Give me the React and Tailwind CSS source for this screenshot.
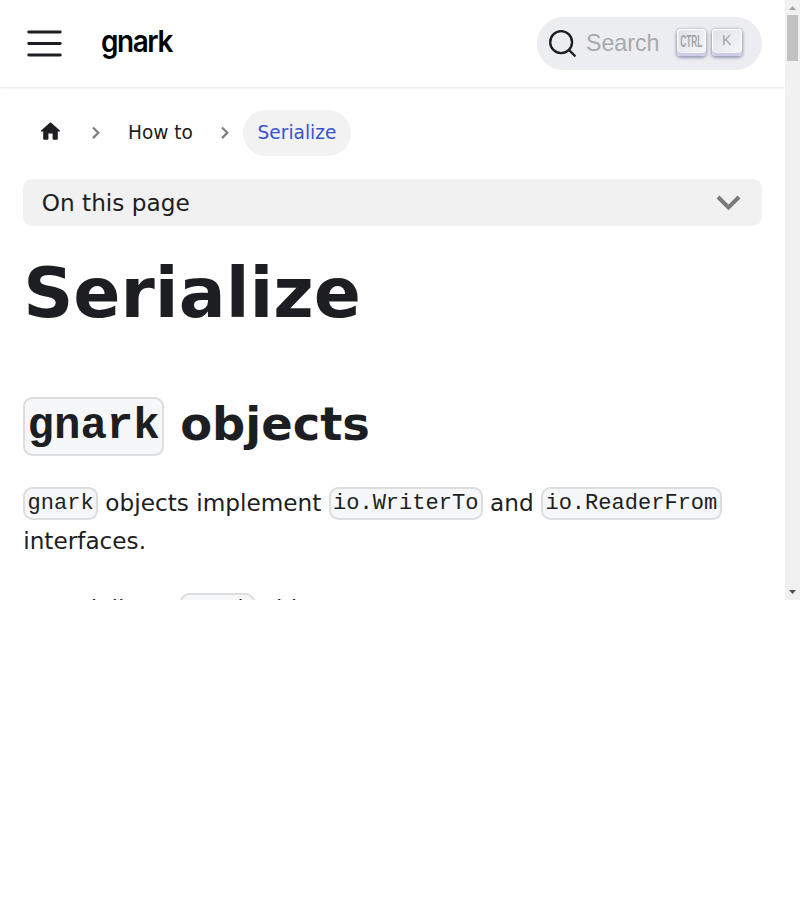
function Chevron() {
  return (
    <svg width="22" height="22" viewBox="0 0 22 22" fill="none" stroke="#7f7f7f" strokeWidth="2.2">
      <path d="M8 5.500 13.300 10.800 8 16.100" />
    </svg>
  );
}

function Code({ children }) {
  return (
    <code className="rounded-[9.28px] border-2 border-black/10 bg-[#f6f7f8] p-[2.32px] align-middle font-['Liberation_Mono',monospace] text-[95%]">
      {children}
    </code>
  );
}

function Key({ children }) {
  return (
    <kbd className="flex h-[27px] w-[29.500px] items-center justify-center rounded-[4px] bg-linear-to-br from-[#dde1e8] to-[#f8f8f8] pb-[5px] font-['Liberation_Sans',sans-serif] text-[14px] text-[#a3a4a7] shadow-[inset_0_-3px_0_0_#cdcde6,inset_0_0_1px_1px_#fff,0_1px_3px_1px_rgba(30,35,90,0.4)]">
      {children}
    </kbd>
  );
}

export default function App() {
  return (
    <div className="h-[900px] w-[800px] bg-white">
      <div className="flex h-[600px] overflow-hidden font-['DejaVu_Sans',sans-serif] text-[23.2px] leading-[38px] text-[#1c1e21]">
        <div className="h-full w-[785px] overflow-hidden">
          <nav className="flex h-[87px] items-center px-[23px] shadow-[0_1px_2px_0_rgba(0,0,0,0.1)]">
            <svg width="43" height="43" viewBox="0 0 30 30" stroke="#1c1e21" strokeLinecap="round" strokeWidth="2">
              <path d="M4 7h22M4 15h22M4 23h22" />
            </svg>
            <span className="ml-[35px] w-[90px] origin-left scale-x-[0.93] pb-[5px] font-['Inter',sans-serif] text-[30px] font-semibold tracking-[-1.5px] text-black">gnark</span>
            <button className="ml-auto flex h-[53px] w-[225px] items-center rounded-full bg-[#ebedf0] pl-[11px]">
              <svg width="29" height="29" viewBox="0 0 20 20" fill="none" stroke="#1c1e21" strokeWidth="1.6" strokeLinecap="round" strokeLinejoin="round">
                <path d="M14.386 14.386l4.0877 4.0877-4.0877-4.0877c-2.9418 2.9419-7.7115 2.9419-10.6533 0-2.9419-2.9418-2.9419-7.7115 0-10.6533 2.9418-2.9419 7.7115-2.9419 10.6533 0 2.9419 2.9418 2.9419 7.7115 0 10.6533z" />
              </svg>
              <span className="ml-[9px] w-[90.500px] pb-[2px] text-left font-['Liberation_Sans',sans-serif] text-[23.2px] text-[#a8a9ab]">Search</span>
              <span className="flex gap-[6px] pb-[2px]">
                <Key>
                  <span className="-mx-4 inline-block scale-x-[0.52] pt-[3px] text-[16px] font-bold">CTRL</span>
                </Key>
                <Key>K</Key>
              </span>
            </button>
          </nav>

          <main className="px-[23.2px] pt-[23px]">
            <div className="flex h-[46px] items-center text-[18.56px]">
              <svg className="mb-[3px] ml-[15px]" width="25" height="25" viewBox="0 0 24 24" fill="#1c1e21">
                <path d="M10 19v-5h4v5c0 .55.45 1 1 1h3c.55 0 1-.45 1-1v-7h1.700c.46 0 .68-.57.33-.87L12.670 3.600c-.38-.34-.96-.34-1.340 0l-8.360 7.530c-.34.3-.13.87.33.87H5v7c0 .55.45 1 1 1h3c.55 0 1-.45 1-1z" />
              </svg>
              <span className="ml-[22px] flex"><Chevron /></span>
              <span className="ml-[20.800px] w-[86.200px] pb-[1px]">How to</span>
              <Chevron />
              <span className="ml-[6.800px] flex h-[46px] w-[108px] items-center justify-center rounded-full bg-[#f2f2f2] pb-[1px] text-[#3454d1]">Serialize</span>
            </div>

            <div className="mt-[23px] flex h-[47px] items-center justify-between rounded-[9.28px] bg-[#f1f1f1] pr-[21px] pl-[18.560px]">
              <span className="pt-[1px]">On this page</span>
              <svg width="25" height="25" viewBox="0 0 25 25" fill="none" stroke="#7a7a7a" strokeWidth="4">
                <path d="M2 7 12.500 17.500 23 7" />
              </svg>
            </div>

            <h1 className="mt-[23.2px] text-[69.6px] leading-[87px] font-bold">Serialize</h1>
            <h2 className="mt-[58px] text-[46.4px] leading-[58px] font-bold">
              <Code>gnark</Code> <span className="align-[-1px]">objects</span>
            </h2>
            <p className="mt-[28.900px] leading-[36.500px]">
              <Code>gnark</Code> objects implement <Code>io.WriterTo</Code> and <Code>io.ReaderFrom</Code>{' '}
              <span className="align-[-1px]">interfaces.</span>
            </p>
            <p className="mt-[31.300px] leading-[36.500px] whitespace-nowrap">To serialize a <Code>gnark</Code> object:</p>
          </main>
        </div>

        <div className="flex w-[15px] flex-col items-center justify-between bg-[#f1f1f1]">
          <div className="flex flex-col items-center">
            <svg width="15" height="15" viewBox="0 0 15 15"><path d="M4 10h7L7.500 6z" fill="#a3a3a3" /></svg>
            <div className="h-[46px] w-[11px] bg-[#c1c1c1]" />
          </div>
          <svg width="15" height="15" viewBox="0 0 15 15"><path d="M4 5h7L7.500 9z" fill="#505050" /></svg>
        </div>
      </div>
    </div>
  );
}
